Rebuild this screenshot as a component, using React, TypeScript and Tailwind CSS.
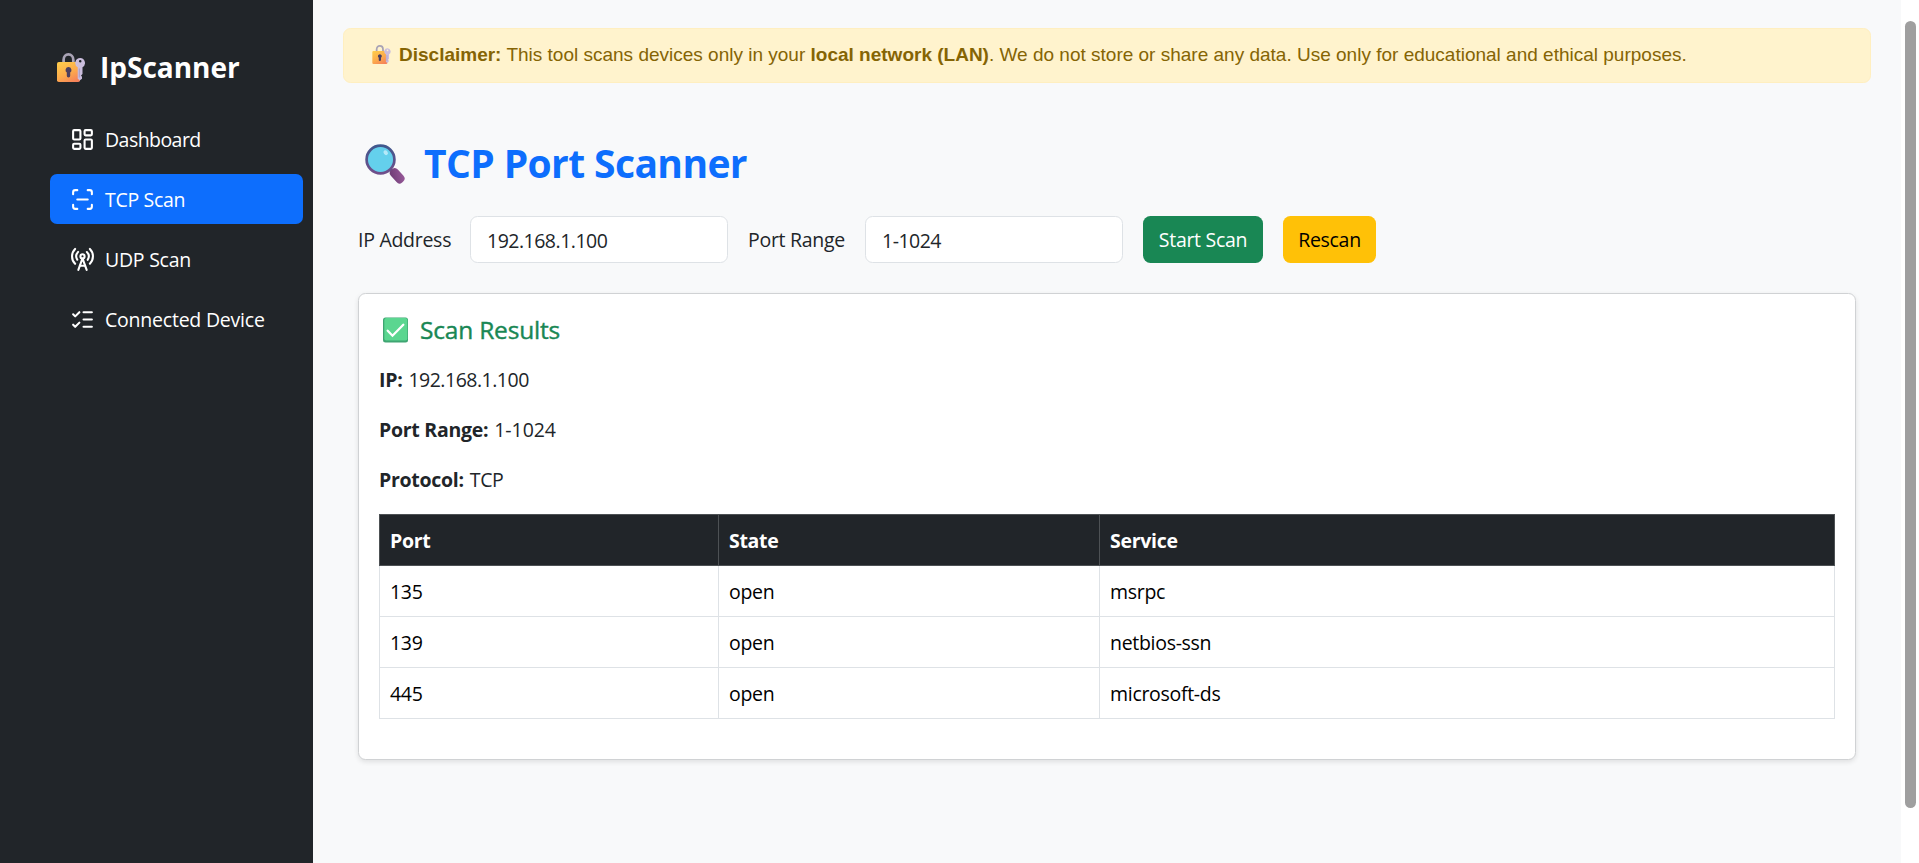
import { LayoutDashboard, ListChecks, RadioTower, ScanLine, type LucideIcon } from "lucide-react";

function LockIcon({ className }: { className: string }) {
  return (
    <svg viewBox="0 0 28 29" className={className}>
      <defs>
        <linearGradient id="lockBody" x1="0.2" y1="0" x2="0.8" y2="1">
          <stop offset="0" stopColor="#fdc94b" />
          <stop offset="0.55" stopColor="#fcaa4c" />
          <stop offset="1" stopColor="#f5805a" />
        </linearGradient>
      </defs>
      <path d="M6.6 11V6.8C6.6 3.4 8.7 1.4 11.4 1.4s4.9 2 4.9 5.4V11" fill="none" stroke="#a9a3b5" strokeWidth="2.7" />
      <rect x="0" y="9" width="23" height="20" rx="1.8" fill="url(#lockBody)" />
      <path d="M11.5 14a3.1 3.1 0 0 0-1.7 5.6v3.2a1.7 1.7 0 0 0 3.4 0v-3.2A3.1 3.1 0 0 0 11.5 14z" fill="#4b3e5e" />
      <path
        fillRule="evenodd"
        d="M23.2 5a5 5 0 0 0-2.5 9.3V25.500l2 2 2.300-1.800v-2l-1-1.200 1.500-1.500V14.300A5 5 0 0 0 23.200 5zm0 2a1.300 1.300 0 1 1 0 2.600 1.300 1.300 0 0 1 0-2.600z"
        fill="#cbbedd"
      />
      <path d="M22.3 15.5v9" stroke="#a895bd" strokeWidth="0.9" />
    </svg>
  );
}

function MagnifierIcon({ className }: { className: string }) {
  return (
    <svg viewBox="0 0 40 40" className={className}>
      <defs>
        <linearGradient id="rim" x1="0" y1="0" x2="0" y2="1">
          <stop offset="0" stopColor="#40588d" />
          <stop offset="1" stopColor="#704f8a" />
        </linearGradient>
        <linearGradient id="handle" x1="0" y1="0" x2="1" y2="1">
          <stop offset="0" stopColor="#6b3b72" />
          <stop offset="1" stopColor="#9a5b9b" />
        </linearGradient>
      </defs>
      <path d="M24.5 24.5l4 4" stroke="#5a4670" strokeWidth="3" />
      <rect x="-4.7" y="-8" width="9.4" height="16.5" rx="4" transform="translate(32 31.6) rotate(-42)" fill="url(#handle)" />
      <circle cx="15.5" cy="15.5" r="13.9" fill="#64d0ec" stroke="url(#rim)" strokeWidth="2.7" />
      <ellipse cx="20.7" cy="8.7" rx="2" ry="2.6" transform="rotate(-35 20.7 8.7)" fill="#b5e9f8" />
    </svg>
  );
}

function CheckIcon({ className }: { className: string }) {
  return (
    <svg viewBox="0 0 25 25" className={className}>
      <rect width="25" height="25" rx="2.5" fill="#3fa572" />
      <rect x="1.3" y="0.5" width="23" height="22.5" rx="2" fill="#5bd690" />
      <path d="M4.7 13.2l4.8 5L20.3 7.3" fill="none" stroke="#fff" strokeWidth="2.3" strokeLinecap="round" />
    </svg>
  );
}

const nav: { label: string; Icon: LucideIcon; tracking: string; active?: boolean }[] = [
  { label: "Dashboard", Icon: LayoutDashboard, tracking: "tracking-[-0.55px]" },
  { label: "TCP Scan", Icon: ScanLine, tracking: "tracking-[-0.3px]", active: true },
  { label: "UDP Scan", Icon: RadioTower, tracking: "tracking-[-0.25px]" },
  { label: "Connected Device", Icon: ListChecks, tracking: "tracking-[-0.22px]" },
];

const details = [
  { name: "IP:", value: "192.168.1.100", tracking: "tracking-[-0.5px]" },
  { name: "Port Range:", value: "1-1024", tracking: "tracking-[-0.05px]" },
  { name: "Protocol:", value: "TCP", tracking: "tracking-[-0.4px]" },
];

const rows = [
  ["135", "open", "msrpc"],
  ["139", "open", "netbios-ssn"],
  ["445", "open", "microsoft-ds"],
];

function Sidebar() {
  return (
    <aside className="w-[313px] shrink-0 bg-[#212529] pl-[50px] pr-[10px] pt-[49px] text-white">
      <div className="flex h-9 items-center pl-[7px]">
        <LockIcon className="h-[29px] w-7" />
        <h1 className="ml-[15px] text-[28px] leading-9 font-bold">IpScanner</h1>
      </div>
      <nav className="mt-[29px] flex flex-col gap-[10px]">
        {nav.map(({ label, Icon, tracking, active }) => (
          <a
            key={label}
            className={`flex h-[50px] items-center gap-[10px] rounded-[7px] pl-5 ${active ? "bg-[#0d6efd]" : ""}`}
          >
            <Icon size={25} />
            <span className={`pt-0.5 ${tracking}`}>{label}</span>
          </a>
        ))}
      </nav>
    </aside>
  );
}

function Field({ label, value, labelWidth }: { label: string; value: string; labelWidth: string }) {
  return (
    <>
      <label className={`${labelWidth} pt-px whitespace-nowrap tracking-[-0.28px]`}>{label}</label>
      <input
        defaultValue={value}
        className="mr-5 h-[47px] w-[258px] rounded-[7.5px] border border-[#dee2e6] bg-white px-4 pt-px tracking-[-0.5px] outline-none"
      />
    </>
  );
}

export default function App() {
  return (
    <div className="flex h-[863px] w-full overflow-hidden bg-white font-['Open_Sans','Noto_Sans',sans-serif] text-[19.5px] leading-[30px] text-[#212529]">
      <Sidebar />
      <main className="min-w-0 flex-1 bg-[#f8f9fa] px-[30px] pt-7">
        <div className="flex h-[55px] items-center rounded-[7.5px] border border-[#ffefc0] bg-[#fff3cd] pb-0.5 pl-7 font-['Liberation_Sans',Arial,sans-serif] text-[19px] whitespace-nowrap text-[#856404]">
          <LockIcon className="mr-2 h-[19px] w-[19px]" />
          <p>
            <strong>Disclaimer:</strong> This tool scans devices only in your <strong>local network (LAN)</strong>. We do
            not store or share any data. Use only for educational and ethical purposes.
          </p>
        </div>

        <section className="pt-[56px] pr-[15px] pl-[15px]">
          <h2 className="flex h-[50px] items-center pl-[7px] text-[39px] leading-[50px] font-bold tracking-[-0.6px] text-[#0d6efd]">
            <MagnifierIcon className="mr-[19px] h-10 w-10" />
            <span className="pb-0.5">TCP Port Scanner</span>
          </h2>

          <div className="mt-[27px] flex items-center">
            <Field label="IP Address" value="192.168.1.100" labelWidth="w-[112px]" />
            <Field label="Port Range" value="1-1024" labelWidth="w-[117px]" />
            <button className="h-[47px] w-[120px] rounded-[7.5px] bg-[#198754] pt-px tracking-[-0.3px] text-white">
              Start Scan
            </button>
            <button className="ml-5 h-[47px] w-[93px] rounded-[7.5px] bg-[#ffc107] pt-px tracking-[-0.3px] text-black">
              Rescan
            </button>
          </div>

          <div className="mt-[30px] h-[467px] rounded-[7.5px] border border-[#d0d2d4] bg-white px-5 pt-[21px] shadow-[0_2px_5px_rgba(0,0,0,0.1)]">
            <h3 className="mb-5 flex h-[30px] items-center pl-1 text-[24.5px] font-medium tracking-[-0.2px] text-[#198754] [-webkit-text-stroke:0.4px_#198754]">
              <CheckIcon className="mr-3 h-[26px] w-[25px]" />
              Scan Results
            </h3>
            <dl className="mb-[19px] flex flex-col gap-5">
              {details.map(({ name, value, tracking }) => (
                <div key={name} className="flex h-[30px] gap-[6px]">
                  <dt className="font-bold tracking-[-0.28px]">{name}</dt>
                  <dd className={tracking}>{value}</dd>
                </div>
              ))}
            </dl>
            <table className="w-full table-fixed border-collapse text-left text-black">
              <colgroup>
                <col className="w-[339px]" />
                <col className="w-[381px]" />
                <col />
              </colgroup>
              <thead>
                <tr className="h-[51px] bg-[#212529] text-white">
                  {["Port", "State", "Service"].map((name) => (
                    <th key={name} className="border border-[#4d5154] px-[10px] pt-0.5 pb-0 font-bold tracking-[-0.3px]">
                      {name}
                    </th>
                  ))}
                </tr>
              </thead>
              <tbody>
                {rows.map((row) => (
                  <tr key={row[0]} className="h-[51px]">
                    {row.map((cell) => (
                      <td key={cell} className="border border-[#dee2e6] px-[10px] pt-0.5 pb-0 tracking-[-0.3px]">
                        {cell}
                      </td>
                    ))}
                  </tr>
                ))}
              </tbody>
            </table>
          </div>
        </section>
      </main>
      <div className="flex w-[18px] shrink-0 justify-end pt-[21px] pr-[3px]">
        <div className="h-[787px] w-[11px] rounded-full bg-[#9f9f9f]" />
      </div>
    </div>
  );
}
